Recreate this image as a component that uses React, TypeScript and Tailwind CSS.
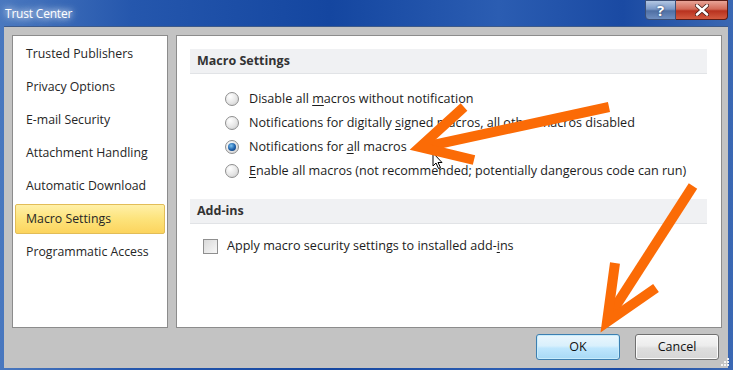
import React from 'react';

const sideItems = [
  'Trusted Publishers',
  'Privacy Options',
  'E-mail Security',
  'Attachment Handling',
  'Automatic Download',
  'Macro Settings',
  'Programmatic Access',
];

const Radio = ({ checked }: { checked?: boolean }) => (
  <span className="w-[14px] h-[14px] rounded-full border border-[#8f8f8f] bg-[radial-gradient(circle_at_35%_30%,#ffffff,#e6e6e6_55%,#c9c9c9)] flex items-center justify-center shrink-0">
    {checked && (
      <span className="w-[8px] h-[8px] rounded-full bg-[radial-gradient(circle_at_40%_35%,#7cc3f2,#1d5fa8_55%,#0b2f63)]" />
    )}
  </span>
);

const U = ({ children }: { children: React.ReactNode }) => <span className="underline underline-offset-2">{children}</span>;

const App: React.FC = () => {
  return (
    <div className="relative w-[733px] h-[370px] overflow-hidden bg-[linear-gradient(90deg,#4a78bf_0%,#2557ad_18%,#1446a0_45%,#2b5db2_68%,#1a4aa3_85%,#3b68b3_100%)] font-['Open_Sans',sans-serif] text-[12.6px] text-[#1c1c1c]">
      {/* Title bar */}
      <div className="h-[26px] flex items-start">
        <span className="mt-[5px] ml-[5px] text-white text-[12px] [text-shadow:0_0_6px_#ffffff,0_0_10px_#cfe0ff] tracking-[-0.2px]">Trust Center</span>
        <div className="ml-auto mr-[5px] flex h-[20px]">
          <div className="w-[31px] h-[20px] rounded-bl-[4px] border border-[#3a4f77] bg-[linear-gradient(180deg,#b3c7e3_0%,#7a98c6_45%,#4f6fa3_55%,#6f8fc1_100%)] flex items-center justify-center text-white font-bold text-[15px] [text-shadow:0_0_2px_#1a2f55]">?</div>
          <div className="w-[52px] h-[20px] rounded-br-[4px] border border-l-0 border-[#5a1d17] bg-[linear-gradient(180deg,#e8a497_0%,#d26a58_45%,#b8321f_55%,#d35a3f_100%)] flex items-center justify-center">
            <svg width="14" height="12" viewBox="0 0 14 12">
              <path d="M2 1.5 L12 10.5 M12 1.5 L2 10.5" stroke="#3b1510" strokeWidth="4" strokeLinecap="round" />
              <path d="M2 1.5 L12 10.5 M12 1.5 L2 10.5" stroke="#ffffff" strokeWidth="2.6" strokeLinecap="round" />
            </svg>
          </div>
        </div>
      </div>

      {/* Body */}
      <div className="ml-[4px] mr-[5px] h-[342px] bg-[#c3c3c3] border-t border-[#3d5a8a] pt-[8px] pl-[8px] pr-[1px] flex flex-col">
        <div className="flex gap-[8px] h-[293px]">
          {/* Sidebar */}
          <div className="w-[156px] h-full bg-white border border-[#8c8c8c] pt-[3px] px-[2px] flex flex-col gap-[3px]">
            {sideItems.map((item) => (
              <div
                key={item}
                className={`h-[30px] flex items-center pl-[10px] rounded-[2px] text-[12.3px] text-[#262626] ${
                  item === 'Macro Settings'
                    ? 'border border-[#e2bd58] bg-[linear-gradient(180deg,#fff0a8_0%,#fde37b_50%,#fcd45e_100%)]'
                    : 'border border-transparent'
                }`}
              >
                {item}
              </div>
            ))}
          </div>

          {/* Content */}
          <div className="w-[546px] h-full bg-white border border-[#8c8c8c] flex flex-col">
            <div className="mt-[13px] ml-[13px] mr-[14px] h-[25px] bg-[#f0f1f3] border-b border-[#e1e3e6] flex items-center pl-[7px] font-bold text-[12.5px] text-[#333]">
              Macro Settings
            </div>
            <div className="mt-[13px] pl-[48px] flex flex-col">
              <div className="h-[24px] flex items-center gap-[10px]">
                <Radio />
                <span>Disable all <U>m</U>acros without notification</span>
              </div>
              <div className="h-[24px] flex items-center gap-[10px]">
                <Radio />
                <span>Notifications for digitally <U>s</U>igned macros, all other macros disabled</span>
              </div>
              <div className="h-[24px] flex items-center gap-[10px]">
                <Radio checked />
                <span>Notifications for <U>a</U>ll macros</span>
              </div>
              <div className="h-[24px] flex items-center gap-[10px]">
                <Radio />
                <span><U>E</U>nable all macros (not recommended; potentially dangerous code can run)</span>
              </div>
            </div>
            <div className="mt-[16px] ml-[13px] mr-[14px] h-[25px] bg-[#f0f1f3] border-b border-[#e1e3e6] flex items-center pl-[7px] font-bold text-[12.5px] text-[#333]">
              Add-ins
            </div>
            <div className="mt-[13px] pl-[26px] flex items-center gap-[9px]">
              <span className="w-[15px] h-[15px] border border-[#8f8f8f] bg-[linear-gradient(135deg,#d9d9d9,#f7f7f7)] shrink-0" />
              <span>Apply macro security settings to installed add-<U>i</U>ns</span>
            </div>
          </div>
        </div>

        {/* Buttons */}
        <div className="mt-[6px] flex justify-end gap-[15px] pr-[8px]">
          <button className="w-[84px] h-[26px] rounded-[3px] border border-[#3c7fb1] bg-[linear-gradient(180deg,#eaf6fd_0%,#d9f0fc_45%,#bee6fd_55%,#a7d9f5_100%)] text-[12.5px] text-[#111] shadow-[inset_0_0_0_1px_#c8ecfc]">
            OK
          </button>
          <button className="w-[84px] h-[26px] rounded-[3px] border border-[#707070] bg-[linear-gradient(180deg,#f6f6f6_0%,#ececec_45%,#dedede_55%,#d6d6d6_100%)] text-[12.5px] text-[#111] shadow-[inset_0_0_0_1px_#fbfbfb]">
            Cancel
          </button>
        </div>
      </div>

      {/* Resize grip */}
      <svg className="absolute left-[720px] top-[357px]" width="10" height="10" viewBox="0 0 10 10">
        {[[7, 1], [4, 4], [7, 4], [1, 7], [4, 7], [7, 7]].map(([x, y], i) => (
          <rect key={i} x={x} y={y} width="2" height="2" fill="#f4f4f4" />
        ))}
      </svg>

      {/* Mouse cursor */}
      <svg className="absolute left-[432px] top-[152px]" width="12" height="18" viewBox="0 0 12 18">
        <path d="M1 1 L1 14 L4 11 L6.5 16.5 L8.5 15.5 L6 10.5 L10 10.5 Z" fill="#ffffff" stroke="#000" strokeWidth="1" strokeLinejoin="round" />
      </svg>

      {/* Annotation arrows */}
      <svg className="absolute inset-0 pointer-events-none" width="733" height="370" viewBox="0 0 733 370">
        <g stroke="#fb6b06" strokeWidth="10" fill="none" strokeLinejoin="miter" strokeMiterlimit="10">
          <path d="M609 107 L424 147" />
          <path d="M464 107 L420 147 L474 160" />
          <path d="M693 186 L608 318" />
          <path d="M615 263 L607 322 L656 288" />
        </g>
      </svg>
    </div>
  );
};

export default App;
